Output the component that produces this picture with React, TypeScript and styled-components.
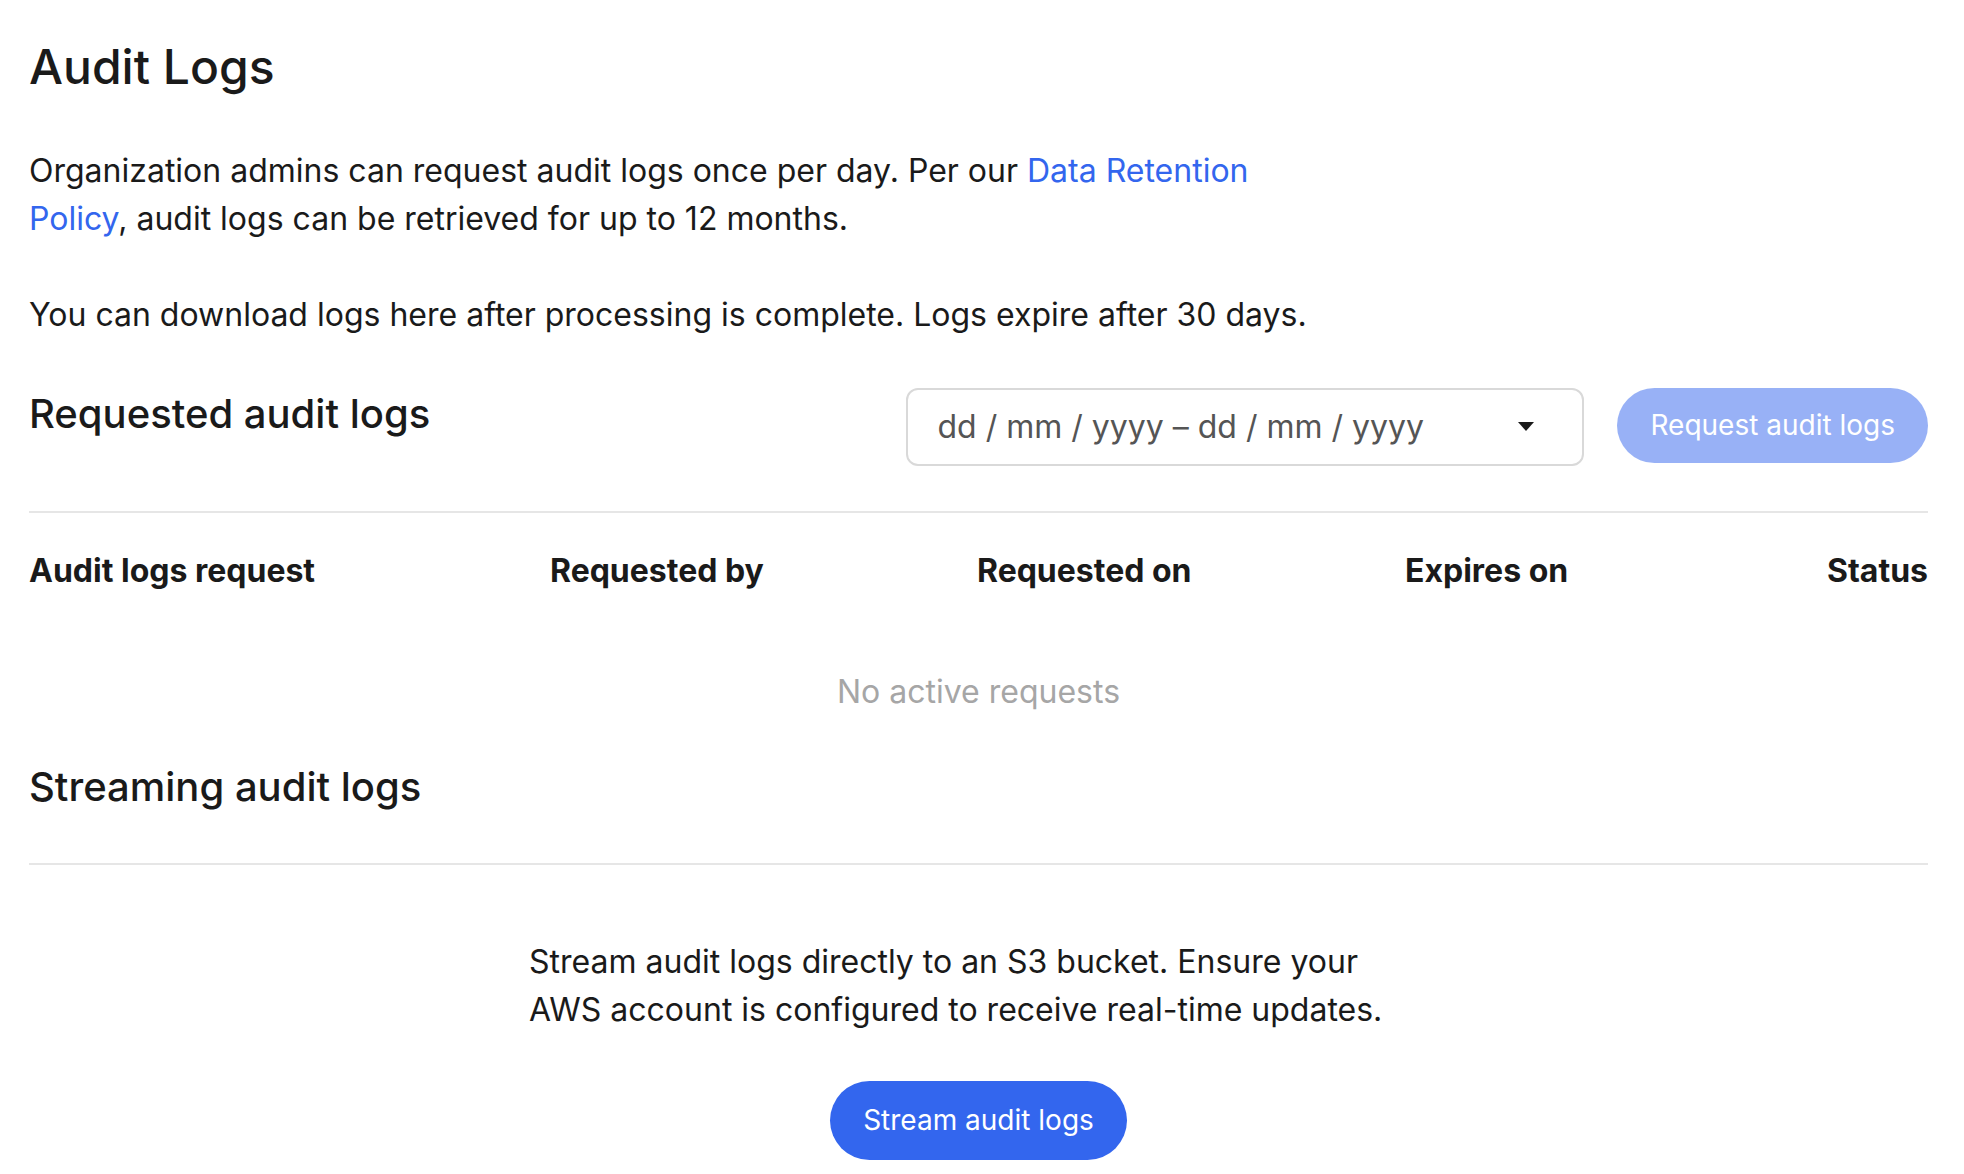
import React from "react";
import styled, { createGlobalStyle } from "styled-components";

const Global = createGlobalStyle`
  html, body { margin: 0; padding: 0; background: #ffffff; }
  body { font-family: Inter, "Noto Sans", sans-serif; color: #1a1a1a; }
  * { box-sizing: border-box; }
`;

const Page = styled.main`
  padding: 38px 36px 0 29px;
  display: flex;
  flex-direction: column;
`;

const Title = styled.h1`
  margin: 0 0 51px;
  font-size: 48px;
  line-height: 1.2;
  font-weight: 500;
`;

const Para = styled.p<{ $last?: boolean }>`
  margin: 0 0 ${(p) => (p.$last ? 0 : 48)}px;
  max-width: 1290px;
  font-size: 32px;
  line-height: 48px;
  font-weight: 400;
`;

const Link = styled.a`
  color: #3366ee;
  text-decoration: none;
`;

const SectionRow = styled.div<{ $mt?: number }>`
  display: flex;
  align-items: flex-start;
  gap: 33px;
  margin-top: ${(p) => p.$mt ?? 0}px;
`;

const SectionTitle = styled.h2`
  margin: 2px 0 0;
  flex: 1;
  font-size: 40px;
  line-height: 48px;
  font-weight: 500;
`;

const DateField = styled.div`
  width: 678px;
  height: 78px;
  border: 2px solid #d9d9d9;
  border-radius: 12px;
  display: flex;
  align-items: center;
  justify-content: space-between;
  padding: 0 48px 0 29px;
  font-size: 32px;
  color: #555555;
`;

const Caret = styled.span`
  width: 0;
  height: 0;
  border-left: 8px solid transparent;
  border-right: 8px solid transparent;
  border-top: 9px solid #1a1a1a;
`;

const PillButton = styled.button<{ $disabled?: boolean; $h: number }>`
  height: ${(p) => p.$h}px;
  padding: 0 33px;
  border: none;
  border-radius: 999px;
  background: #3366ee;
  opacity: ${(p) => (p.$disabled ? 0.5 : 1)};
  color: #ffffff;
  font-family: Inter, "Noto Sans", sans-serif;
  font-size: 28px;
  font-weight: 400;
  white-space: nowrap;
  cursor: pointer;
`;

const Divider = styled.hr<{ $mt: number }>`
  margin: ${(p) => p.$mt}px 0 0;
  border: none;
  border-top: 2px solid #e6e6e6;
`;

const HeaderRow = styled.div`
  display: grid;
  grid-template-columns: 521px 427px 428px 1fr auto;
  padding-top: 34px;
  font-size: 32px;
  line-height: 48px;
  font-weight: 700;
`;

const HeaderCell = styled.div<{ $end?: boolean }>`
  justify-self: ${(p) => (p.$end ? "end" : "start")};
  white-space: nowrap;
`;

const Empty = styled.div`
  margin-top: 73px;
  text-align: center;
  font-size: 32px;
  line-height: 48px;
  color: #a6a6a6;
`;

const StreamBody = styled.div`
  display: flex;
  flex-direction: column;
  align-items: center;
  padding-top: 73px;
`;

const StreamText = styled.p`
  margin: 0;
  width: 899px;
  font-size: 32px;
  line-height: 48px;
`;

const ButtonWrap = styled.div`
  margin-top: 47px;
`;

export default function App() {
  return (
    <>
      <Global />
      <Page>
        <Title>Audit Logs</Title>
        <Para>
          Organization admins can request audit logs once per day. Per our{" "}
          <Link href="#">Data Retention Policy</Link>, audit logs can be retrieved for up to 12
          months.
        </Para>
        <Para $last>
          You can download logs here after processing is complete. Logs expire after 30 days.
        </Para>

        <SectionRow $mt={49}>
          <SectionTitle>Requested audit logs</SectionTitle>
          <DateField>
            <span>dd / mm / yyyy – dd / mm / yyyy</span>
            <Caret />
          </DateField>
          <PillButton $disabled $h={75}>
            Request audit logs
          </PillButton>
        </SectionRow>
        <Divider $mt={45} />
        <HeaderRow>
          <HeaderCell>Audit logs request</HeaderCell>
          <HeaderCell>Requested by</HeaderCell>
          <HeaderCell>Requested on</HeaderCell>
          <HeaderCell>Expires on</HeaderCell>
          <HeaderCell $end>Status</HeaderCell>
        </HeaderRow>
        <Empty>No active requests</Empty>

        <SectionRow $mt={45}>
          <SectionTitle>Streaming audit logs</SectionTitle>
        </SectionRow>
        <Divider $mt={52} />
        <StreamBody>
          <StreamText>
            Stream audit logs directly to an S3 bucket. Ensure your AWS account is configured to
            receive real-time updates.
          </StreamText>
          <ButtonWrap>
            <PillButton $h={79}>Stream audit logs</PillButton>
          </ButtonWrap>
        </StreamBody>
      </Page>
    </>
  );
}
